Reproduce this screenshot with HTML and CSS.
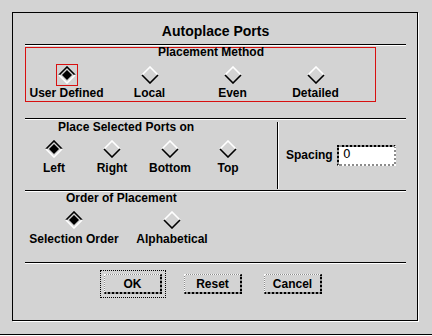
FILE: index.html
```html
<!DOCTYPE html>
<html>
<head>
<meta charset="utf-8">
<link rel="stylesheet" href="styles.css">
</head>
<body>
<svg class="defs" width="0" height="0" aria-hidden="true">
  <symbol id="d-off" viewBox="0 0 18 18">
    <polyline points="1,9 9,1 17,9" fill="none" stroke="#fff" stroke-width="1.6"/>
    <polyline points="1,9 9,17 17,9" fill="none" stroke="#000" stroke-width="1.6"/>
  </symbol>
  <symbol id="d-on" viewBox="0 0 18 18">
    <polyline points="1,9 9,1 17,9" fill="none" stroke="#000" stroke-width="1.6"/>
    <polyline points="1,9 9,17 17,9" fill="none" stroke="#fff" stroke-width="1.6"/>
    <polygon points="9,4 14,9 9,14 4,9" fill="#000"/>
  </symbol>
</svg>
<div class="frame">
  <div class="title">Autoplace Ports</div>
  <div class="sep sep-title"></div>

  <div class="method">
    <div class="group-title method-title">Placement Method</div>
    <div class="radios method-radios">
      <div class="radio"><span class="ind focus"><svg width="18" height="18"><use href="#d-on"/></svg></span><span class="lbl">User Defined</span></div>
      <div class="radio"><span class="ind"><svg width="18" height="18"><use href="#d-off"/></svg></span><span class="lbl">Local</span></div>
      <div class="radio"><span class="ind"><svg width="18" height="18"><use href="#d-off"/></svg></span><span class="lbl">Even</span></div>
      <div class="radio"><span class="ind"><svg width="18" height="18"><use href="#d-off"/></svg></span><span class="lbl">Detailed</span></div>
    </div>
  </div>

  <div class="sep sep-method"></div>

  <div class="sides">
    <div class="side-group">
      <div class="group-title side-title">Place Selected Ports on</div>
      <div class="radios side-radios">
        <div class="radio"><span class="ind"><svg width="18" height="18"><use href="#d-on"/></svg></span><span class="lbl lbl-low">Left</span></div>
        <div class="radio"><span class="ind"><svg width="18" height="18"><use href="#d-off"/></svg></span><span class="lbl lbl-low">Right</span></div>
        <div class="radio"><span class="ind"><svg width="18" height="18"><use href="#d-off"/></svg></span><span class="lbl lbl-low">Bottom</span></div>
        <div class="radio"><span class="ind"><svg width="18" height="18"><use href="#d-off"/></svg></span><span class="lbl lbl-low">Top</span></div>
      </div>
    </div>
    <div class="vsep"></div>
    <div class="spacing">
      <span class="spacing-lbl">Spacing</span>
      <div class="field">0</div>
    </div>
  </div>

  <div class="sep"></div>

  <div class="order">
    <div class="group-title order-title">Order of Placement</div>
    <div class="radios order-radios">
      <div class="radio"><span class="ind"><svg width="18" height="18"><use href="#d-on"/></svg></span><span class="lbl lbl-low">Selection Order</span></div>
      <div class="radio"><span class="ind"><svg width="18" height="18"><use href="#d-off"/></svg></span><span class="lbl lbl-low">Alphabetical</span></div>
    </div>
  </div>

  <div class="sep sep-order"></div>

  <div class="buttons">
    <div class="btn btn-default">OK</div>
    <div class="btn">Reset</div>
    <div class="btn">Cancel</div>
  </div>
</div>
<div class="bottom-line"></div>
</body>
</html>
```

FILE: styles.css
```css
html, body {
  margin: 0;
  padding: 0;
  background: #d3d3d3;
}
body {
  width: 432px;
  height: 336px;
  overflow: hidden;
  font-family: "Liberation Sans", Arial, sans-serif;
  font-weight: bold;
  font-size: 12px;
  color: #000;
}
.defs {
  position: absolute;
  width: 0;
  height: 0;
}
.frame {
  box-sizing: content-box;
  margin: 12px 0 0 12px;
  width: 381px;
  height: 307px;
  padding: 0 11px 0 12px;
  border: 1px solid #000;
  box-shadow: 1px 1px 0 #fff;
  display: flex;
  flex-direction: column;
}
.title {
  margin-top: 10px;
  height: 16px;
  line-height: 16px;
  font-size: 14px;
  text-align: center;
}
.sep {
  height: 0;
  border-top: 1px solid #000;
  border-bottom: 1px solid #fff;
  flex: none;
}
.sep-title { margin-top: 5px; }
.method {
  margin-top: 1px;
  width: 349px;
  height: 53px;
  border: 1px solid #d81010;
  flex: none;
}
.group-title {
  height: 12px;
  line-height: 12px;
  white-space: nowrap;
}
.method-title {
  margin-top: -2px;
  padding-left: 132px;
}
.radios {
  display: grid;
}
.method-radios {
  margin-top: 6px;
  margin-left: -1px;
  grid-template-columns: repeat(4, 83px);
}
.radio {
  display: flex;
  flex-direction: column;
  align-items: center;
}
.ind {
  box-sizing: border-box;
  width: 22px;
  height: 22px;
  display: flex;
  align-items: center;
  justify-content: center;
}
.ind svg { display: block; }
.ind.focus { border: 1px solid #d81010; }
.lbl {
  margin-top: 1px;
  height: 12px;
  line-height: 12px;
  white-space: nowrap;
}
.lbl-low { margin-top: 2px; }
.sep-method { margin-top: 16px; }
.sides {
  height: 70px;
  display: flex;
  flex: none;
}
.side-group {
  width: 252px;
}
.side-title {
  margin-top: 1px;
  padding-left: 33px;
}
.side-radios {
  margin-top: 5px;
  grid-template-columns: repeat(4, 58px);
}
.vsep {
  margin: 2px 0 1px;
  width: 0;
  border-left: 1px solid #000;
  border-right: 1px solid #fff;
}
.spacing {
  flex: 1;
  display: flex;
  align-items: center;
  padding-left: 7px;
}
.spacing-lbl {
  width: 51px;
}
.field {
  box-sizing: border-box;
  width: 59px;
  height: 21px;
  border-style: dotted;
  border-width: 2px;
  border-color: #000 #fff #fff #000;
  background: linear-gradient(#fff, #fff) padding-box, #8c8c8c border-box;
  font-family: "DejaVu Sans", "Liberation Sans", sans-serif;
  font-weight: normal;
  font-size: 12px;
  line-height: 12px;
  color: #000;
  padding: 1px 0 0 4px;
}
.order {
  height: 70px;
  flex: none;
}
.order-title {
  padding-left: 41px;
}
.order-radios {
  margin-top: 5px;
  grid-template-columns: repeat(2, 98px);
}
.sep-order { margin-top: 0; }
.buttons {
  margin-top: 10px;
  padding-left: 79px;
  display: flex;
  gap: 22px;
}
.btn {
  box-sizing: border-box;
  width: 58px;
  height: 20px;
  border-style: dotted;
  border-width: 1px 2px 2px 1px;
  border-color: #fff #000 #000 #fff;
  background: linear-gradient(#d3d3d3, #d3d3d3) padding-box, #8c8c8c border-box;
  display: flex;
  align-items: center;
  justify-content: center;
  line-height: 12px;
}
.btn-default {
  outline: 1px dotted #000;
  outline-offset: 3px;
}
.bottom-line {
  margin-top: 13px;
  height: 0;
  border-top: 1px solid #000;
  border-bottom: 1px solid #fff;
}
```
